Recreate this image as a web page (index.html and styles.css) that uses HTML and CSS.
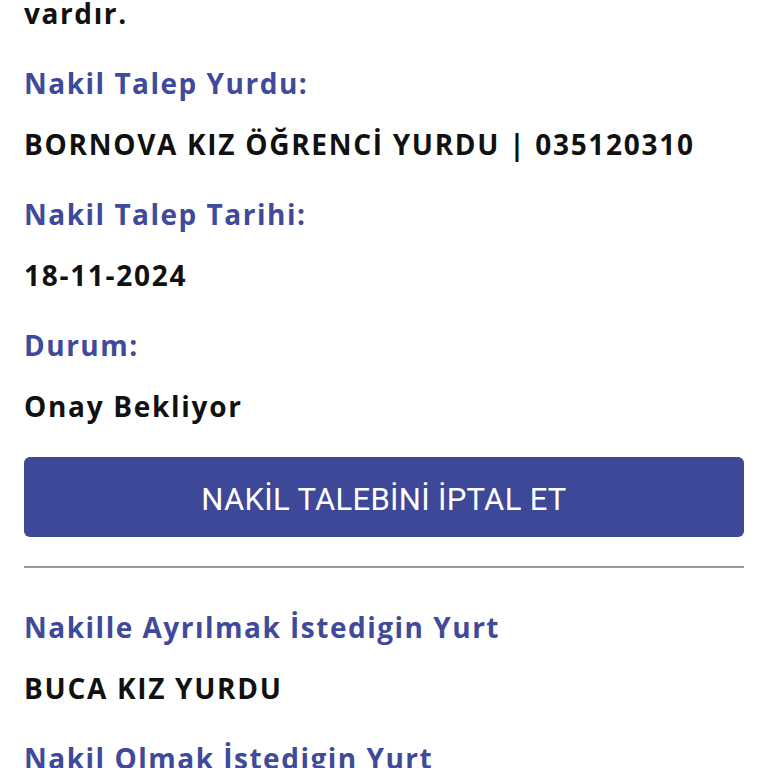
FILE: index.html
```html
<!DOCTYPE html>
<html lang="tr">
<head>
    <meta charset="UTF-8">
    <meta name="viewport" content="width=device-width, initial-scale=1.0">
    <title>Nakil Talebi</title>
    <link rel="stylesheet" href="styles.css">
</head>
<body>
    <div class="sayfa">
        <p class="aciklama">vardır.</p>

        <div class="bilgi">
            <p class="etiket">Nakil Talep Yurdu:</p>
            <p class="deger">BORNOVA KIZ ÖĞRENCİ YURDU | 035120310</p>
        </div>
        <div class="bilgi">
            <p class="etiket">Nakil Talep Tarihi:</p>
            <p class="deger">18-11-2024</p>
        </div>
        <div class="bilgi">
            <p class="etiket">Durum:</p>
            <p class="deger">Onay Bekliyor</p>
        </div>

        <button class="iptal">NAKİL TALEBİNİ İPTAL ET</button>

        <hr class="ayirac">

        <div class="bilgi">
            <p class="etiket">Nakille Ayrılmak İstedigin Yurt</p>
            <p class="deger">BUCA KIZ YURDU</p>
        </div>
        <div class="bilgi">
            <p class="etiket">Nakil Olmak İstedigin Yurt</p>
        </div>
    </div>
</body>
</html>
```

FILE: styles.css
```css
*{
    margin: 0;
    padding: 0;
    box-sizing: border-box;
}
body{
    background-color: white;
    font-family: "Open Sans", "Noto Sans", sans-serif;
    overflow: hidden;
}
.sayfa{
    padding: 0 24px;
    margin-top: -5px;
}
.aciklama{
    font-size: 28px;
    font-weight: 700;
    line-height: 36px;
    letter-spacing: 1.6px;
    color: #111;
    margin-bottom: 34px;
}
.bilgi{
    margin-bottom: 34px;
}
.etiket{
    font-size: 28px;
    font-weight: 700;
    line-height: 36px;
    letter-spacing: 1.5px;
    color: #3f4a9a;
    margin-bottom: 25px;
}
.deger{
    font-size: 28px;
    font-weight: 700;
    line-height: 36px;
    letter-spacing: 1.7px;
    color: #111;
}
.iptal{
    display: block;
    width: 100%;
    height: 80px;
    margin-top: -1px;
    background-color: #3e4899;
    border: none;
    border-radius: 6px;
    color: white;
    font-family: Roboto, sans-serif;
    font-size: 31px;
    font-weight: 400;
    letter-spacing: 0.3px;
    padding-top: 4px;
    cursor: pointer;
}
.ayirac{
    border: none;
    height: 2px;
    background-color: #9a9a9a;
    margin: 29px 0 41px;
}
```
